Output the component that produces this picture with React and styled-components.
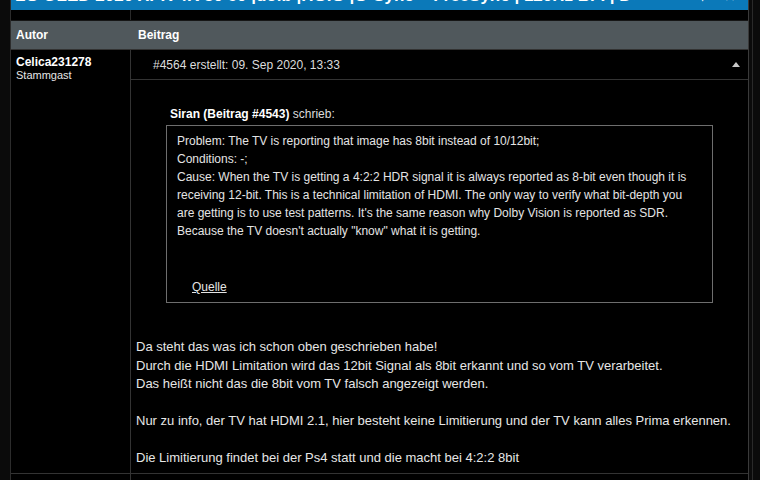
import React from "react";
import styled, { createGlobalStyle } from "styled-components";

const post = {
  id: 4564,
  created: "09. Sep 2020, 13:33",
  author: "Celica231278",
  rank: "Stammgast",
  quote: {
    author: "Siran",
    ref: 4543,
    lines: [
      "Problem: The TV is reporting that image has 8bit instead of 10/12bit;",
      "Conditions: -;",
      "Cause: When the TV is getting a 4:2:2 HDR signal it is always reported as 8-bit even though it is",
      "receiving 12-bit. This is a technical limitation of HDMI. The only way to verify what bit-depth you",
      "are getting is to use test patterns. It's the same reason why Dolby Vision is reported as SDR.",
      "Because the TV doesn't actually \"know\" what it is getting.",
    ],
  },
  text: [
    "Da steht das was ich schon oben geschrieben habe!",
    "Durch die HDMI Limitation wird das 12bit Signal als 8bit erkannt und so vom TV verarbeitet.",
    "Das heißt nicht das die 8bit vom TV falsch angezeigt werden.",
    "",
    "Nur zu info, der TV hat HDMI 2.1, hier besteht keine Limitierung und der TV kann alles Prima erkennen.",
    "",
    "Die Limitierung findet bei der Ps4 statt und die macht bei 4:2:2 8bit",
  ],
};

export default function App() {
  return (
    <>
      <Global />
      <Page>
        <Frame>
          <TitleBar>
            <TitleText>LG OLED 2020 XPR 4K 50 60 |dolb |HGIG |G-Sync + FreeSync | 120Hz BFI | DTQ</TitleText>
            <TitleTools>
              <span>▾</span>
              <span>✕</span>
            </TitleTools>
          </TitleBar>
          <Row>
            <Cell />
            <Cell />
          </Row>
          <HeadRow>
            <HeadCell>Autor</HeadCell>
            <HeadCell $pad={7}>Beitrag</HeadCell>
          </HeadRow>
          <Row $border>
            <AuthorCell>
              <Name>{post.author}</Name>
              <Rank>{post.rank}</Rank>
            </AuthorCell>
            <PostCell>
              <PostHead>
                <span>#{post.id} erstellt: {post.created}</span>
                <svg width="8" height="5" viewBox="0 0 8 5">
                  <path d="M0 5 L4 0 L8 5 Z" fill="#c8c8c8" />
                </svg>
              </PostHead>
              <PostBody>
                <Quote>
                  <QuoteTitle>
                    <b>
                      {post.quote.author} (Beitrag #{post.quote.ref})
                    </b>{" "}
                    schrieb:
                  </QuoteTitle>
                  <QuoteBox>
                    {post.quote.lines.map((l, i) => (
                      <div key={i}>{l}</div>
                    ))}
                    <Source href="#">Quelle</Source>
                  </QuoteBox>
                </Quote>
                <Text>
                  {post.text.map((l, i) => (
                    <div key={i}>{l || "\u00a0"}</div>
                  ))}
                </Text>
              </PostBody>
            </PostCell>
          </Row>
          <Row $border>
            <AuthorCell>
              <Name>Pan Minnesota</Name>
            </AuthorCell>
            <PostCell />
          </Row>
        </Frame>
        <Scroll />
      </Page>
    </>
  );
}

const Global = createGlobalStyle`
  body {
    margin: 0;
    background: #0b0b0b;
    font-family: "Liberation Sans", Arial, sans-serif;
    color: #e2e2e2;
    overflow: hidden;
  }
`;

const Page = styled.div`
  display: flex;
  align-items: flex-start;
  padding-left: 10px;
`;

const Frame = styled.div`
  box-sizing: border-box;
  width: 739px;
  margin-top: -17px;
  background: #000;
  border-left: 1px solid #2c2c2c;
  border-right: 1px solid #3a3a3a;
`;

const Scroll = styled.div`
  width: 3px;
  height: 480px;
  margin-left: 3px;
  border-left: 1px solid #2a2a2a;
`;

const TitleBar = styled.div`
  display: flex;
  justify-content: space-between;
  height: 27px;
  padding: 3px 12px 0 4px;
  box-sizing: border-box;
  background: #0b79b9;
  color: #fff;
  font-size: 17px;
  font-weight: bold;
  line-height: 20px;
  white-space: nowrap;
  overflow: hidden;
`;

const TitleText = styled.span`
  overflow: hidden;
  max-width: 620px;
`;

const TitleTools = styled.div`
  display: flex;
  gap: 18px;
  font-size: 14px;
`;

const Row = styled.div`
  display: grid;
  grid-template-columns: 120px 1fr;
  border-top: ${(p) => (p.$border ? "1px solid #333" : "none")};
  min-height: 10px;
`;

const Cell = styled.div`
  border-right: 1px solid #2a2a2a;
  &:last-child {
    border-right: none;
  }
`;

const HeadRow = styled.div`
  display: grid;
  grid-template-columns: 120px 1fr;
  height: 28px;
  background: #50585c;
  border-top: 1px solid #161616;
`;

const HeadCell = styled.div`
  display: flex;
  align-items: center;
  padding-left: ${(p) => p.$pad ?? 5}px;
  color: #fff;
  font-size: 12px;
  font-weight: bold;
`;

const AuthorCell = styled.div`
  box-sizing: border-box;
  padding: 5px 5px;
  border-right: 1px solid #333;
`;

const Name = styled.div`
  color: #fff;
  font-size: 12px;
  font-weight: bold;
  line-height: 14px;
`;

const Rank = styled.div`
  font-size: 11px;
  line-height: 12px;
  color: #e6e6e6;
`;

const PostCell = styled.div`
  min-height: 12px;
`;

const PostHead = styled.div`
  display: flex;
  align-items: center;
  justify-content: space-between;
  height: 29px;
  padding: 0 8px 0 22px;
  border-bottom: 1px solid #333;
  font-size: 12px;
  color: #dcdcdc;
`;

const PostBody = styled.div`
  padding: 25px 5px 5px 5px;
`;

const Quote = styled.div`
  margin: 0 30px 0 30px;
`;

const QuoteTitle = styled.div`
  padding-left: 4px;
  font-size: 12px;
  line-height: 18px;
  color: #dcdcdc;
  b {
    color: #fff;
  }
`;

const QuoteBox = styled.div`
  margin-top: 2px;
  padding: 6px 10px 6px 10px;
  border: 1px solid #6e6e6e;
  font-size: 12px;
  line-height: 18px;
  color: #e4e4e4;
`;

const Source = styled.a`
  display: inline-block;
  margin: 38px 0 0 15px;
  color: #e4e4e4;
  text-decoration: underline;
`;

const Text = styled.div`
  margin-top: 35px;
  font-size: 13px;
  line-height: 18.5px;
  color: #e6e6e6;
`;
